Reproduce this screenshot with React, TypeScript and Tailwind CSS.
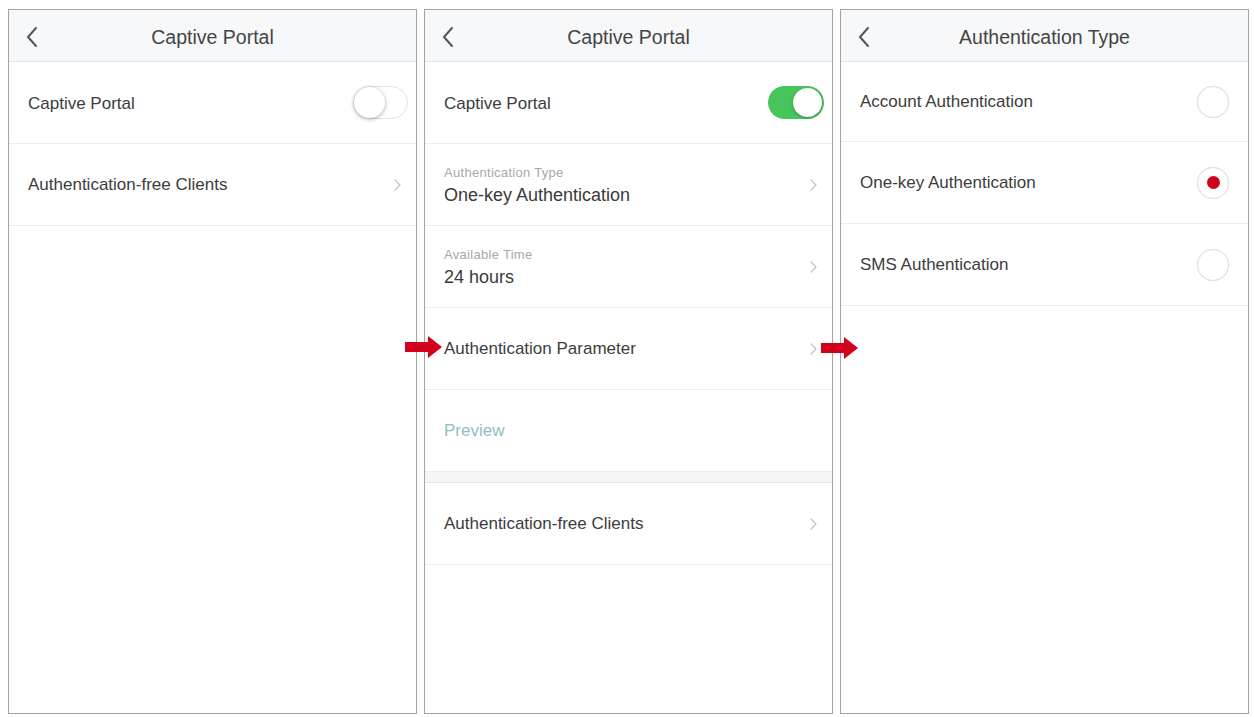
import React from 'react';

const font = { fontFamily: '"Liberation Sans", Arial, sans-serif' };

function Header({ title }: { title: string }) {
	return (
		<div className="relative h-[52px] flex items-center justify-center pt-[4px] bg-[#f6f8fa] border-b border-[#e2e5e8]">
			<svg className="absolute left-[16px] top-[16px]" width="14" height="22" viewBox="0 0 14 22">
				<path d="M11 2 L3 11 L11 20" fill="none" stroke="#555" strokeWidth="2" strokeLinecap="round" strokeLinejoin="round" />
			</svg>
			<span className="text-[19.5px] text-[#454545]">{title}</span>
		</div>
	);
}

function Chevron() {
	return (
		<div className="w-[32px] flex justify-end pr-[6px]">
			<svg width="9" height="14" viewBox="0 0 9 14" className="shrink-0">
				<path d="M2 2 L7 7 L2 12" fill="none" stroke="#c4c4c4" strokeWidth="1.3" strokeLinecap="round" strokeLinejoin="round" />
			</svg>
		</div>
	);
}

function Toggle({ on }: { on: boolean }) {
	if (on) {
		return (
			<div className="w-[56px] h-[33px] rounded-full bg-[#47c45c] p-[2px] flex justify-end">
				<div className="w-[29px] h-[29px] rounded-full bg-white shadow-[0_1px_3px_rgba(0,0,0,0.3)]" />
			</div>
		);
	}
	return (
		<div className="w-[55px] h-[33px] rounded-full bg-white border border-[#e4e4e4] flex items-center">
			<div className="w-[31px] h-[31px] rounded-full bg-white shadow-[0_1px_4px_rgba(0,0,0,0.35)]" />
		</div>
	);
}

function Row({ children, h = 'h-[82px]', pr = 'pr-[8px]' }: { children: React.ReactNode; h?: string; pr?: string }) {
	return (
		<div className={`${h} flex items-center justify-between pl-[19px] ${pr} border-b border-[#ececec]`}>
			{children}
		</div>
	);
}

function Radio({ checked }: { checked: boolean }) {
	return (
		<div className="w-[32px] h-[32px] rounded-full border-[1.5px] border-[#e0e0e0] flex items-center justify-center bg-white shadow-[0_0_1px_rgba(0,0,0,0.15)]">
			{checked && <div className="w-[13px] h-[13px] rounded-full bg-[#d0021b]" />}
		</div>
	);
}

function Arrow({ className }: { className: string }) {
	return (
		<svg className={`absolute ${className}`} width="37" height="22" viewBox="0 0 37 22">
			<path d="M0 6 H23 V0 L37 11 L23 22 V16 H0 Z" fill="#d3001c" />
		</svg>
	);
}

function Panel({ children }: { children: React.ReactNode }) {
	return (
		<div className="w-[409px] h-[705px] border border-[#a3a3a3] bg-white flex flex-col overflow-hidden">
			{children}
		</div>
	);
}

const label = 'text-[17px] text-[#3c3c3c]';
const small = 'text-[13px] tracking-[0.3px] text-[#a8a8a8] leading-[15px]';
const value = 'text-[18px] text-[#3a3a3a] leading-[22px] mt-[4px]';

export default function App() {
	return (
		<div className="w-[1254px] h-[717px] bg-white pt-[9px] pl-[8px]" style={font}>
			<div className="relative flex gap-[7px]">
				<Panel>
					<Header title="Captive Portal" />
					<Row>
						<span className={`${label} pt-[3px]`}>Captive Portal</span>
						<Toggle on={false} />
					</Row>
					<Row>
						<span className={label}>Authentication-free Clients</span>
						<Chevron />
					</Row>
				</Panel>

				<Panel>
					<Header title="Captive Portal" />
					<Row>
						<span className={`${label} pt-[3px]`}>Captive Portal</span>
						<Toggle on={true} />
					</Row>
					<Row>
						<div className="flex flex-col pt-[2px]">
							<span className={small}>Authentication Type</span>
							<span className={value}>One-key Authentication</span>
						</div>
						<Chevron />
					</Row>
					<Row>
						<div className="flex flex-col pt-[2px]">
							<span className={small}>Available Time</span>
							<span className={value}>24 hours</span>
						</div>
						<Chevron />
					</Row>
					<Row>
						<span className={label}>Authentication Parameter</span>
						<Chevron />
					</Row>
					<Row>
						<span className="text-[17px] text-[#94bcc6]">Preview</span>
					</Row>
					<div className="h-[11px] bg-[#f4f5f6] border-b border-[#e4e4e4]" />
					<Row>
						<span className={label}>Authentication-free Clients</span>
						<Chevron />
					</Row>
				</Panel>

				<Panel>
					<Header title="Authentication Type" />
					<Row h="h-[80px]" pr="pr-[19px]">
						<span className={label}>Account Authentication</span>
						<Radio checked={false} />
					</Row>
					<Row pr="pr-[19px]">
						<span className={label}>One-key Authentication</span>
						<Radio checked={true} />
					</Row>
					<Row pr="pr-[19px]">
						<span className={label}>SMS Authentication</span>
						<Radio checked={false} />
					</Row>
				</Panel>

				<Arrow className="left-[397px] top-[327px]" />
				<Arrow className="left-[813px] top-[328px]" />
			</div>
		</div>
	);
}
